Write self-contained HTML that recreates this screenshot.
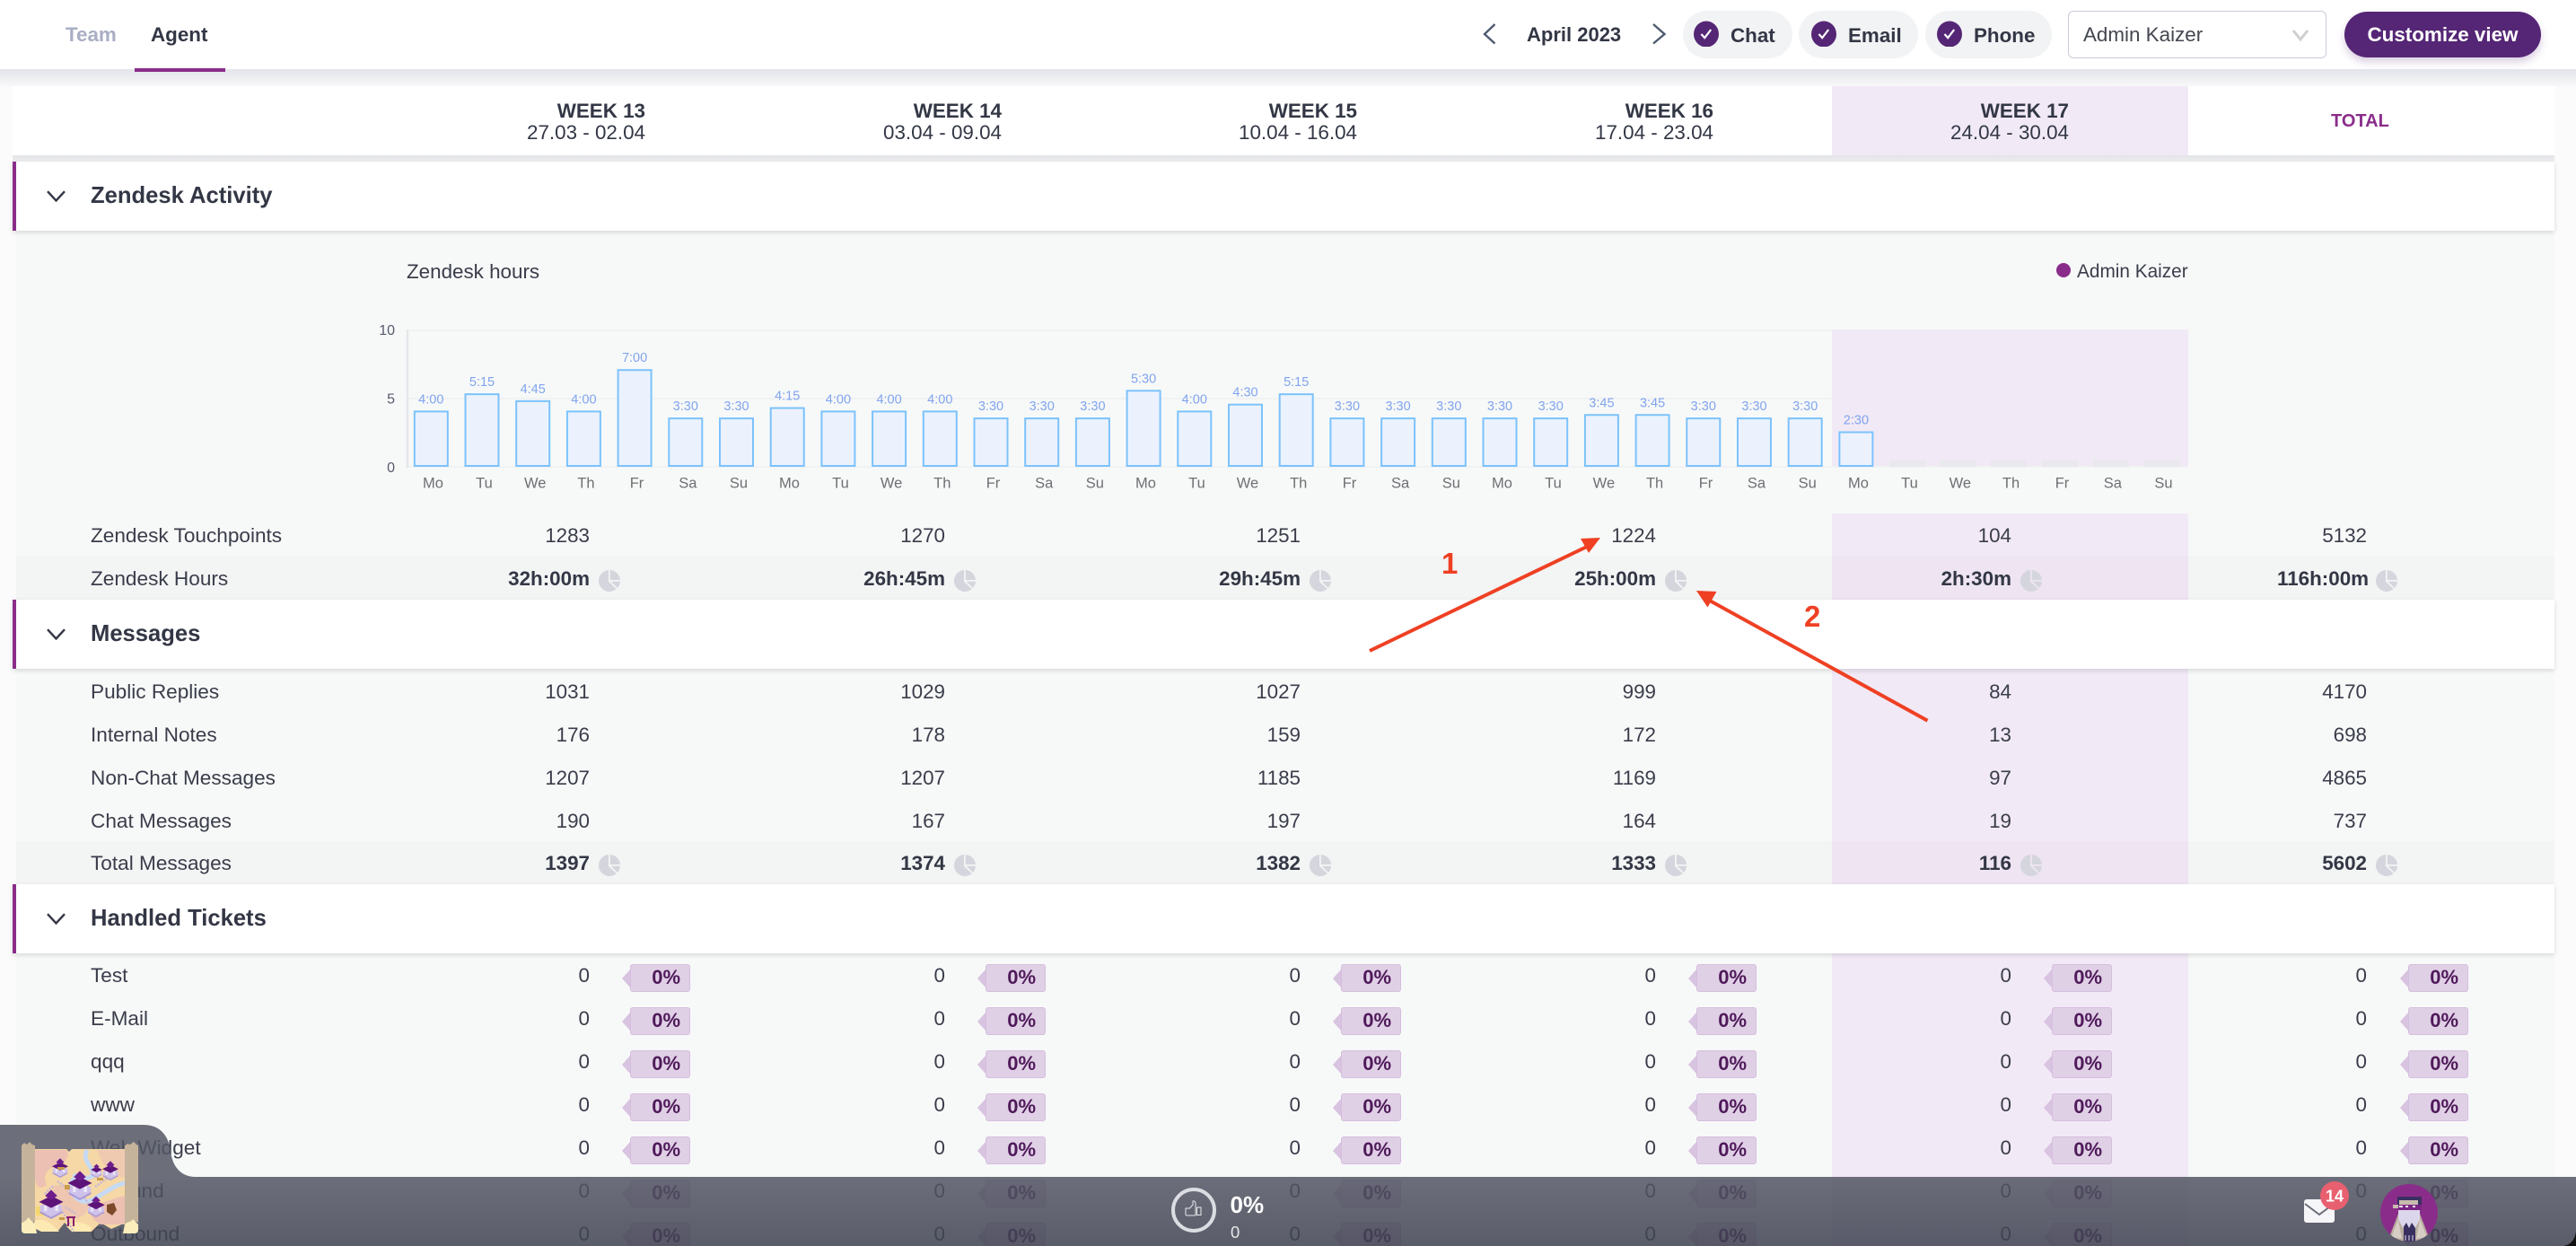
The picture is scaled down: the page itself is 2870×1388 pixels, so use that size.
<!DOCTYPE html>
<html><head><meta charset="utf-8"><title>Agent</title>
<style>
html,body{margin:0;padding:0;width:2870px;height:1388px;overflow:hidden;background:#fbfbfb}
body{position:relative;font-family:"Liberation Sans",sans-serif;font-size:22.4px;color:#3a3d4a}
div,span,b,i,svg{position:absolute}
i,b.v{font-style:normal;width:100px;text-align:right;top:0;height:48px;line-height:50px}
b.v{font-weight:bold;color:#333745}
.row{left:0;width:2870px;height:48px}
.row span{left:101px;height:48px;line-height:50px;white-space:nowrap;font-size:22.6px}
.x0{left:557px}.x1{left:953px}.x2{left:1349px}.x3{left:1745px}.x4{left:2141px}.x5{left:2537px}
.sec{left:14px;width:2832px;height:77px;background:#fff;box-shadow:0 2px 5px rgba(50,50,70,.16)}
.sec:before{content:"";position:absolute;left:0;top:0;width:4px;height:77px;background:#8a2d8a}
.sec b{left:87px;top:0;line-height:77px;font-size:25.6px;color:#333745;white-space:nowrap}
.sec svg{left:38px;top:32px}
.w{width:200px;text-align:right;top:112px;line-height:24px;color:#333745;white-space:nowrap}
.w b{position:static;display:block}
.pill{top:12px;height:53px;background:#f2f3f5;border-radius:27px}
.pill svg{top:11px}
.pill b{top:0;line-height:55px;color:#333745;white-space:nowrap}
.pie{top:15px}
.bd{width:67px;height:31px;top:12px;background:#e0d0e6;border:1px solid #d6bede;border-radius:3px;box-sizing:border-box;font-weight:bold;font-size:22px;line-height:28px;color:#4f1a5a;text-align:right;padding-right:10px}
.bd:before{content:"";position:absolute;left:-10px;top:5px;width:9px;height:20px;background:#d8c3e0;clip-path:polygon(100% 0,100% 100%,0 50%)}
.b0{left:702px}.b1{left:1098px}.b2{left:1494px}.b3{left:1890px}.b4{left:2286px}.b5{left:2683px}
</style></head>
<body>
<svg width="0" height="0" style="position:absolute"><defs>
<symbol id="pie" viewBox="0 0 24 24"><path fill="#d5d6dd" d="M11 .05A12 12 0 1 0 19.8 21.1L11 13Z"/><path fill="#d5d6dd" d="M12.8 0A12 12 0 0 1 24 11H12.8Z"/><path fill="#d5d6dd" d="M13.6 12.8H24A12 12 0 0 1 21 20Z"/></symbol>
<symbol id="chk" viewBox="0 0 28 28" overflow="visible"><ellipse cx="14" cy="14.5" rx="14" ry="14.5" fill="#552675"/><path d="M8.5 14.5l3.7 4.2 7-9.2" fill="none" stroke="#fff" stroke-width="2.2"/></symbol>
<symbol id="chev" viewBox="0 0 21 13"><path d="M1 1.2l9.5 10.3L20 1.2" fill="none" stroke="#333745" stroke-width="2.4"/></symbol>
<symbol id="house" viewBox="-16 -16 32 32" overflow="visible"><path fill="#cfc2ea" d="M-11 3 0-3l11 6v5L0 14-11 8Z"/><path fill="#a897d6" d="M-11 8 0 14l11-6v2L0 16-11 10Z"/><path fill="#fff" opacity=".6" d="M-7 2h3v6h-3zM4 2h3v6h-3z"/><path fill="#5d1479" d="M-12-1 0-7 12-1 0 5Z"/><path fill="#6d1e8c" d="M-6-7 0-13 6-7 0-3Z"/></symbol>
</defs></svg>

<!-- top header -->
<div style="left:0;top:77px;width:2870px;height:20px;background:linear-gradient(#e3e4ea,#f9f9fa)"></div>
<div style="left:0;top:0;width:2870px;height:77px;background:#fff"></div>
<b style="left:73px;top:0;color:#a9aec4;font-size:22.4px;line-height:77px">Team</b>
<b style="left:168px;top:0;line-height:77px;color:#333745">Agent</b>
<div style="left:150px;top:76px;width:101px;height:4px;background:#8a2d8a"></div>
<svg style="left:1650px;top:24px" width="210" height="28" viewBox="1650 24 210 28"><path d="M1665.5 27 1654 38l11.5 10.500M1842 27l12.500 11-12.500 10.500" fill="none" stroke="#4f5b70" stroke-width="2.400"/></svg>
<b style="left:1701px;top:0;line-height:77px;color:#333745;white-space:nowrap;font-size:22px">April 2023</b>
<div class="pill" style="left:1875px;width:122px"><svg style="left:12px" width="28" height="29"><use href="#chk"/></svg><b style="left:53px">Chat</b></div>
<div class="pill" style="left:2004px;width:133px"><svg style="left:14px" width="28" height="29"><use href="#chk"/></svg><b style="left:55px">Email</b></div>
<div class="pill" style="left:2145px;width:141px"><svg style="left:13px" width="28" height="29"><use href="#chk"/></svg><b style="left:54px">Phone</b></div>
<div style="left:2304px;top:12px;width:288px;height:53px;box-sizing:border-box;border:1.5px solid #c9ccdc;border-radius:6px;background:#fff"></div>
<span style="left:2321px;top:12px;line-height:53px;color:#444750;white-space:nowrap">Admin Kaizer</span>
<svg style="left:2552px;top:30px" width="22" height="18"><path d="M3 4l8 10 8-10" fill="none" stroke="#cfcfcf" stroke-width="3"/></svg>
<div style="left:2612px;top:13px;width:219px;height:51px;background:#552675;border-radius:26px;box-shadow:0 5px 9px rgba(85,38,117,.22);text-align:center;color:#fff;font-weight:bold;line-height:51px">Customize view</div>

<!-- table head -->
<div style="left:14px;top:173px;width:2832px;height:8px;background:linear-gradient(#e2e3e6,#f1f1f3)"></div>
<div style="left:14px;top:96px;width:2832px;height:77px;background:#fff"></div>
<div style="left:2041px;top:96px;width:397px;height:77px;background:#f1e9f6"></div>
<div class="w" style="left:519px"><b>WEEK 13</b>27.03 - 02.04</div>
<div class="w" style="left:916px"><b>WEEK 14</b>03.04 - 09.04</div>
<div class="w" style="left:1312px"><b>WEEK 15</b>10.04 - 16.04</div>
<div class="w" style="left:1709px"><b>WEEK 16</b>17.04 - 23.04</div>
<div class="w" style="left:2105px"><b>WEEK 17</b>24.04 - 30.04</div>
<b style="left:2597px;top:96px;line-height:79px;font-size:20px;color:#8a2d8a">TOTAL</b>

<!-- panels -->
<div style="left:18px;top:257px;width:2828px;height:1131px;background:#f7f9f8"></div>
<div style="left:2041px;top:367px;width:397px;height:153px;background:#f1e9f5"></div>
<div style="left:2041px;top:572px;width:397px;height:816px;background:#f2e9f6"></div>
<div style="left:18px;top:620px;width:2828px;height:48px;background:rgba(100,50,80,.025)"></div>
<div style="left:18px;top:937px;width:2828px;height:48px;background:rgba(100,50,80,.025)"></div>

<div class="sec" style="top:180px"><svg width="21" height="13"><use href="#chev"/></svg><b>Zendesk Activity</b></div>

<span style="left:453px;top:280px;line-height:46px;white-space:nowrap">Zendesk hours</span>
<div style="left:2291px;top:293px;width:16px;height:16px;border-radius:50%;background:#8a2d8a"></div>
<span style="left:2314px;top:280px;line-height:46px;font-size:20.8px;white-space:nowrap">Admin Kaizer</span>

<svg style="left:0;top:340px" width="2870" height="230" viewBox="0 340 2870 230" font-family="Liberation Sans, sans-serif">
<g stroke="#f1f2f4" stroke-width="2"><path d="M454 368H2041M454 444H2041M454 520H2438"/></g>
<path d="M454 367V521" stroke="#e6e7ec" stroke-width="2.500"/>
<g font-size="16" fill="#555a6b" text-anchor="end"><text x="440" y="373">10</text><text x="440" y="449.500">5</text><text x="440" y="526">0</text></g>
<g fill="#ebf2fe" stroke="#7cc2fc" stroke-width="2">
<rect x="461.800" y="458.400" width="37" height="60.600"/><rect x="518.500" y="439.150" width="37" height="79.850"/><rect x="575.200" y="446.850" width="37" height="72.150"/><rect x="631.900" y="458.400" width="37" height="60.600"/><rect x="688.600" y="412.200" width="37" height="106.800"/><rect x="745.300" y="466.100" width="37" height="52.900"/><rect x="802" y="466.100" width="37" height="52.900"/>
<rect x="858.700" y="454.550" width="37" height="64.450"/><rect x="915.400" y="458.400" width="37" height="60.600"/><rect x="972.100" y="458.400" width="37" height="60.600"/><rect x="1028.800" y="458.400" width="37" height="60.600"/><rect x="1085.500" y="466.100" width="37" height="52.900"/><rect x="1142.200" y="466.100" width="37" height="52.900"/><rect x="1198.900" y="466.100" width="37" height="52.900"/>
<rect x="1255.600" y="435.300" width="37" height="83.700"/><rect x="1312.300" y="458.400" width="37" height="60.600"/><rect x="1369" y="450.700" width="37" height="68.300"/><rect x="1425.700" y="439.150" width="37" height="79.850"/><rect x="1482.400" y="466.100" width="37" height="52.900"/><rect x="1539.100" y="466.100" width="37" height="52.900"/><rect x="1595.800" y="466.100" width="37" height="52.900"/>
<rect x="1652.500" y="466.100" width="37" height="52.900"/><rect x="1709.200" y="466.100" width="37" height="52.900"/><rect x="1765.900" y="462.250" width="37" height="56.750"/><rect x="1822.600" y="462.250" width="37" height="56.750"/><rect x="1879.300" y="466.100" width="37" height="52.900"/><rect x="1936" y="466.100" width="37" height="52.900"/><rect x="1992.700" y="466.100" width="37" height="52.900"/>
<rect x="2049.400" y="481.500" width="37" height="37.500"/>
</g>
<g fill="#e9e9ed"><rect x="2105" y="513" width="40" height="7"/><rect x="2162" y="513" width="40" height="7"/><rect x="2218" y="513" width="40" height="7"/><rect x="2275" y="513" width="40" height="7"/><rect x="2332" y="513" width="40" height="7"/><rect x="2388" y="513" width="40" height="7"/></g>
<g font-size="14.500" fill="#80a4ef" text-anchor="middle">
<text x="480.300" y="449.400">4:00</text><text x="537" y="430.200">5:15</text><text x="593.700" y="437.900">4:45</text><text x="650.400" y="449.400">4:00</text><text x="707.100" y="403.200">7:00</text><text x="763.800" y="457.100">3:30</text><text x="820.500" y="457.100">3:30</text>
<text x="877.200" y="445.600">4:15</text><text x="933.900" y="449.400">4:00</text><text x="990.600" y="449.400">4:00</text><text x="1047.300" y="449.400">4:00</text><text x="1104" y="457.100">3:30</text><text x="1160.700" y="457.100">3:30</text><text x="1217.400" y="457.100">3:30</text>
<text x="1274.100" y="426.300">5:30</text><text x="1330.800" y="449.400">4:00</text><text x="1387.500" y="441.700">4:30</text><text x="1444.200" y="430.200">5:15</text><text x="1500.900" y="457.100">3:30</text><text x="1557.600" y="457.100">3:30</text><text x="1614.300" y="457.100">3:30</text>
<text x="1671" y="457.100">3:30</text><text x="1727.700" y="457.100">3:30</text><text x="1784.400" y="453.300">3:45</text><text x="1841.100" y="453.300">3:45</text><text x="1897.800" y="457.100">3:30</text><text x="1954.500" y="457.100">3:30</text><text x="2011.200" y="457.100">3:30</text>
<text x="2067.900" y="472.500">2:30</text>
</g>
<g font-size="16.500" fill="#6d6f73" text-anchor="middle" transform="translate(1.500 0)">
<text x="481" y="543.500">Mo</text><text x="538" y="543.500">Tu</text><text x="594.700" y="543.500">We</text><text x="651.400" y="543.500">Th</text><text x="708" y="543.500">Fr</text><text x="764.800" y="543.500">Sa</text><text x="821.500" y="543.500">Su</text>
<text x="878" y="543.500">Mo</text><text x="935" y="543.500">Tu</text><text x="991.600" y="543.500">We</text><text x="1048.300" y="543.500">Th</text><text x="1105" y="543.500">Fr</text><text x="1161.700" y="543.500">Sa</text><text x="1218.400" y="543.500">Su</text>
<text x="1275" y="543.500">Mo</text><text x="1332" y="543.500">Tu</text><text x="1388.500" y="543.500">We</text><text x="1445.200" y="543.500">Th</text><text x="1502" y="543.500">Fr</text><text x="1558.600" y="543.500">Sa</text><text x="1615.300" y="543.500">Su</text>
<text x="1672" y="543.500">Mo</text><text x="1729" y="543.500">Tu</text><text x="1785.400" y="543.500">We</text><text x="1842.100" y="543.500">Th</text><text x="1899" y="543.500">Fr</text><text x="1955.500" y="543.500">Sa</text><text x="2012.200" y="543.500">Su</text>
<text x="2069" y="543.500">Mo</text><text x="2126" y="543.500">Tu</text><text x="2182.300" y="543.500">We</text><text x="2239" y="543.500">Th</text><text x="2296" y="543.500">Fr</text><text x="2352.400" y="543.500">Sa</text><text x="2409" y="543.500">Su</text>
</g>
</svg>

<div class="row" style="top:572px"><span>Zendesk Touchpoints</span><i class="x0">1283</i><i class="x1">1270</i><i class="x2">1251</i><i class="x3">1224</i><i class="x4">104</i><i class="x5">5132</i></div>
<div class="row" style="top:620px"><span>Zendesk Hours</span><b class="v x0">32h:00m</b><b class="v x1">26h:45m</b><b class="v x2">29h:45m</b><b class="v x3">25h:00m</b><b class="v x4">2h:30m</b><b class="v x5">116h:00m</b>
<svg class="pie" style="left:667px" width="24" height="24"><use href="#pie"/></svg><svg class="pie" style="left:1063px" width="24" height="24"><use href="#pie"/></svg><svg class="pie" style="left:1459px" width="24" height="24"><use href="#pie"/></svg><svg class="pie" style="left:1855px" width="24" height="24"><use href="#pie"/></svg><svg class="pie" style="left:2251px" width="24" height="24"><use href="#pie"/></svg><svg class="pie" style="left:2647px" width="24" height="24"><use href="#pie"/></svg></div>

<div class="sec" style="top:668px"><svg width="21" height="13"><use href="#chev"/></svg><b>Messages</b></div>
<div class="row" style="top:746px"><span>Public Replies</span><i class="x0">1031</i><i class="x1">1029</i><i class="x2">1027</i><i class="x3">999</i><i class="x4">84</i><i class="x5">4170</i></div>
<div class="row" style="top:794px"><span>Internal Notes</span><i class="x0">176</i><i class="x1">178</i><i class="x2">159</i><i class="x3">172</i><i class="x4">13</i><i class="x5">698</i></div>
<div class="row" style="top:842px"><span>Non-Chat Messages</span><i class="x0">1207</i><i class="x1">1207</i><i class="x2">1185</i><i class="x3">1169</i><i class="x4">97</i><i class="x5">4865</i></div>
<div class="row" style="top:890px"><span>Chat Messages</span><i class="x0">190</i><i class="x1">167</i><i class="x2">197</i><i class="x3">164</i><i class="x4">19</i><i class="x5">737</i></div>
<div class="row" style="top:937px"><span>Total Messages</span><b class="v x0">1397</b><b class="v x1">1374</b><b class="v x2">1382</b><b class="v x3">1333</b><b class="v x4">116</b><b class="v x5">5602</b>
<svg class="pie" style="left:667px" width="24" height="24"><use href="#pie"/></svg><svg class="pie" style="left:1063px" width="24" height="24"><use href="#pie"/></svg><svg class="pie" style="left:1459px" width="24" height="24"><use href="#pie"/></svg><svg class="pie" style="left:1855px" width="24" height="24"><use href="#pie"/></svg><svg class="pie" style="left:2251px" width="24" height="24"><use href="#pie"/></svg><svg class="pie" style="left:2647px" width="24" height="24"><use href="#pie"/></svg></div>

<div class="sec" style="top:985px"><svg width="21" height="13"><use href="#chev"/></svg><b>Handled Tickets</b></div>
<div class="row" style="top:1062px"><span>Test</span><i class="x0">0</i><i class="x1">0</i><i class="x2">0</i><i class="x3">0</i><i class="x4">0</i><i class="x5">0</i><div class="bd b0">0%</div><div class="bd b1">0%</div><div class="bd b2">0%</div><div class="bd b3">0%</div><div class="bd b4">0%</div><div class="bd b5">0%</div></div>
<div class="row" style="top:1110px"><span>E-Mail</span><i class="x0">0</i><i class="x1">0</i><i class="x2">0</i><i class="x3">0</i><i class="x4">0</i><i class="x5">0</i><div class="bd b0">0%</div><div class="bd b1">0%</div><div class="bd b2">0%</div><div class="bd b3">0%</div><div class="bd b4">0%</div><div class="bd b5">0%</div></div>
<div class="row" style="top:1158px"><span>qqq</span><i class="x0">0</i><i class="x1">0</i><i class="x2">0</i><i class="x3">0</i><i class="x4">0</i><i class="x5">0</i><div class="bd b0">0%</div><div class="bd b1">0%</div><div class="bd b2">0%</div><div class="bd b3">0%</div><div class="bd b4">0%</div><div class="bd b5">0%</div></div>
<div class="row" style="top:1206px"><span>www</span><i class="x0">0</i><i class="x1">0</i><i class="x2">0</i><i class="x3">0</i><i class="x4">0</i><i class="x5">0</i><div class="bd b0">0%</div><div class="bd b1">0%</div><div class="bd b2">0%</div><div class="bd b3">0%</div><div class="bd b4">0%</div><div class="bd b5">0%</div></div>
<div class="row" style="top:1254px"><span>Web Widget</span><i class="x0">0</i><i class="x1">0</i><i class="x2">0</i><i class="x3">0</i><i class="x4">0</i><i class="x5">0</i><div class="bd b0">0%</div><div class="bd b1">0%</div><div class="bd b2">0%</div><div class="bd b3">0%</div><div class="bd b4">0%</div><div class="bd b5">0%</div></div>
<div class="row" style="top:1302px"><span>Inbound</span><i class="x0">0</i><i class="x1">0</i><i class="x2">0</i><i class="x3">0</i><i class="x4">0</i><i class="x5">0</i><div class="bd b0">0%</div><div class="bd b1">0%</div><div class="bd b2">0%</div><div class="bd b3">0%</div><div class="bd b4">0%</div><div class="bd b5">0%</div></div>
<div class="row" style="top:1350px"><span>Outbound</span><i class="x0">0</i><i class="x1">0</i><i class="x2">0</i><i class="x3">0</i><i class="x4">0</i><i class="x5">0</i><div class="bd b0">0%</div><div class="bd b1">0%</div><div class="bd b2">0%</div><div class="bd b3">0%</div><div class="bd b4">0%</div><div class="bd b5">0%</div></div>

<!-- annotations + bottom bar -->
<svg style="left:0;top:0" width="2870" height="1388" viewBox="0 0 2870 1388" font-family="Liberation Sans, sans-serif">
<path d="M1526 725 1770 608" fill="none" stroke="#ef4023" stroke-width="4"/>
<path d="M1783 599 1761 600 1770 616Z" fill="#ef4023"/>
<path d="M2147.500 802.700 1903 668" fill="none" stroke="#ef4023" stroke-width="4"/>
<path d="M1890 658 1912.500 659 1902.500 676.500Z" fill="#ef4023"/>
<text x="1606" y="639" font-size="33" font-weight="bold" fill="#ef4023">1</text>
<text x="2010" y="698" font-size="33" font-weight="bold" fill="#ef4023">2</text>

<defs><linearGradient id="bg" gradientUnits="userSpaceOnUse" x1="0" y1="1311" x2="0" y2="1388"><stop offset="0" stop-color="#535664" stop-opacity=".85"/><stop offset="1" stop-color="#3e4150" stop-opacity=".85"/></linearGradient>
<clipPath id="av"><ellipse cx="2684" cy="1351" rx="32" ry="32"/></clipPath></defs>
<path d="M0 1253H160C178 1253 188 1265 190 1282C192 1300 202 1311 218 1311H2870V1388H0Z" fill="url(#bg)"/>
<path d="M2856 1388Q2868 1386 2870 1372V1388Z" fill="#111"/>

<circle cx="1330" cy="1348" r="23" fill="none" stroke="#dcdde2" stroke-width="4"/>
<path d="M1321 1346h4.500l3.500-4v-4c2-.5 3 1 3 2.500v5v8.500h-9.500c-1 0-1.500-.7-1.500-1.500zM1333.500 1345h4.500v8.500h-4.500z" fill="none" stroke="#e8e8ec" stroke-width="1"/>
<text x="1370.500" y="1351" font-size="26" font-weight="bold" fill="#fff">0%</text>
<text x="1371" y="1379" font-size="18.500" fill="#e6e6e8">0</text>

<rect x="2567" y="1336" width="34" height="26" rx="3" fill="#f6f6f8"/>
<path d="M2568 1341l16 12 16-12" fill="none" stroke="#6a6d79" stroke-width="2"/>
<circle cx="2601" cy="1332" r="16" fill="#e8606f"/>
<text x="2601" y="1338.500" font-size="18" font-weight="bold" fill="#fff" text-anchor="middle">14</text>

<ellipse cx="2684" cy="1351" rx="32" ry="32" fill="#8a2d8a"/>
<g clip-path="url(#av)">
<path d="M2662 1378 2672 1352H2696L2706 1378 2698 1384H2670Z" fill="#b9ab9d"/>
<path d="M2664 1378 2672 1358 2676 1380ZM2704 1378 2696 1358 2692 1380Z" fill="#d6cdc4"/>
<rect x="2678" y="1360" width="13" height="24" fill="#3a3060"/>
<rect x="2671" y="1333" width="27" height="9" fill="#3a3060"/>
<rect x="2673" y="1337" width="21" height="5" fill="#c9bcae"/>
<path d="M2672 1348H2696V1358L2691 1368 2687 1362 2684 1368 2681 1362 2677 1368 2672 1358Z" fill="#dcd6ec"/>
<rect x="2671" y="1342" width="27" height="6" fill="#7a2585"/>
<path d="M2673 1344h4M2680 1344h3M2688 1344h3" stroke="#efe8f5" stroke-width="2"/>
<rect x="2666" y="1342" width="6" height="4" fill="#c9bcae"/>
<path d="M2680 1376v6M2684 1376v6M2688 1376v6" stroke="#e4dff0" stroke-width="1"/>
</g>

<!-- treasure map -->
<g transform="translate(24 1272)">
<path d="M14 8H50l3 3 3-3H72l4 0H116V90L100 97 88 90 78 100 58 100 48 90 40 100 14 92Z" fill="#f6d8a6"/>
<path d="M15 9H50C56 16 46 26 36 28C26 32 24 40 28 48C20 54 16 50 15 40Z" fill="#ecc0b2"/>
<path d="M116 9V40C108 40 100 34 94 28C88 20 86 14 84 9Z" fill="#efcab0"/>
<path d="M116 60V92L88 92C74 84 72 74 82 70C92 68 104 62 116 60Z" fill="#ecc0b2"/>
<path d="M34 50C48 44 62 54 72 66C78 76 70 84 58 86C46 82 36 66 34 50Z" fill="#efc7b0"/>
<path d="M14 88C26 84 34 92 42 100H22L14 96ZM50 94C58 88 70 88 78 96L76 100H56Z" fill="#fdeab2"/>
<path d="M73 9C66 22 82 28 79 38C74 42 62 40 58 36" fill="none" stroke="#c6daf4" stroke-width="5"/>
<path d="M116 46C104 47 92 58 78 65C66 70 56 60 55 50C54 42 62 38 70 38" fill="none" stroke="#c6daf4" stroke-width="5"/>
<path d="M40 44 60 58M26 58 36 48M82 50 96 40M60 80 48 72M46 78 58 100M70 62 78 74" stroke="#c5b6d8" stroke-width="2.500" stroke-dasharray="2 1.500" fill="none"/>
<path d="M16 72h10v10H16z" fill="#f5d76e"/>
<use href="#house" x="31" y="16" width="24" height="24"/>
<use href="#house" x="75" y="23" width="17" height="17"/>
<use href="#house" x="87" y="19" width="24" height="24"/>
<use href="#house" x="47" y="29" width="36" height="36"/>
<use href="#house" x="15" y="50" width="36" height="36"/>
<use href="#house" x="70" y="58" width="26" height="26"/>
<path d="M95 70l8-2 3 8-5 6-6-4Z" fill="#7c4a2a"/>
<path d="M50 84h10M52 84v10M58 84v10" stroke="#8a1f6f" stroke-width="2" fill="none"/>
<path d="M48 48h6v5h-6zM40 28h8v3h-8zM84 40h7v3h-7zM42 84h6v3h-6z" fill="#c99b4a"/>
<path d="M0 4 3 1 6 3 9 0 12 3 15 4V90C10 88 4 88 0 92Z" fill="#c5b39b"/>
<path d="M115 4 118 2 121 3 125 0 128 3 130 4V90C126 88 120 88 115 92Z" fill="#c5b39b"/>
<path d="M0 90C3 90 6 86 8 84 10 88 13 89 15 92L17 102H4Q0 102 0 98Z" fill="#fcedbc"/>
<path d="M115 92C118 88 122 90 124 86 126 88 128 90 130 92V98Q130 102 126 102H113Z" fill="#fcedbc"/>
</g>
</svg>
</body></html>
